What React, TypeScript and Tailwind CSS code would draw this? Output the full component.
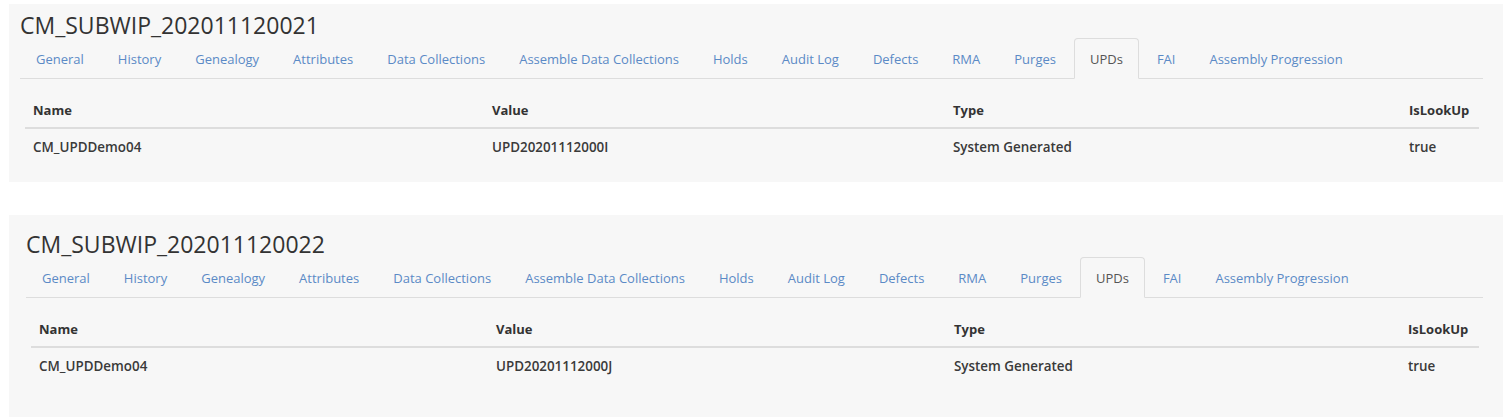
import React from 'react';

const tabs = [
  'General',
  'History',
  'Genealogy',
  'Attributes',
  'Data Collections',
  'Assemble Data Collections',
  'Holds',
  'Audit Log',
  'Defects',
  'RMA',
  'Purges',
  'UPDs',
  'FAI',
  'Assembly Progression',
];

interface UpdRow {
  name: string;
  value: string;
  type: string;
  isLookUp: string;
}

interface ContainerPanelProps {
  title: string;
  rows: UpdRow[];
  panelClass: string;
  cols: string;
}

const TabBar: React.FC<{ active: string }> = ({ active }) => (
  <ul className="flex border-b border-[#dddddd] mr-[20px]">
    {tabs.map((t) => (
      <li key={t} className="-mb-px mr-[2px]">
        {t === active ? (
          <span className="block px-[15px] pt-[10px] pb-[9px] leading-5 text-[13px] text-[#555555] bg-[#f7f7f7] border border-[#dddddd] border-b-transparent rounded-t">
            {t}
          </span>
        ) : (
          <a className="block px-[15px] pt-[10px] pb-[9px] leading-5 text-[13px] text-[#5b8ac6] border border-transparent cursor-pointer">
            {t}
          </a>
        )}
      </li>
    ))}
  </ul>
);

const ContainerPanel: React.FC<ContainerPanelProps> = ({ title, rows, panelClass, cols }) => (
  <div className={`bg-[#f7f7f7] ${panelClass}`}>
    <h3 className="text-[23px] leading-[26px] text-[#333333]">{title}</h3>
    <TabBar active="UPDs" />
    <div className="mt-3 ml-[5px] mr-[24px] text-[#333333]">
      <div className={`grid ${cols} border-b-2 border-[#dddddd] font-bold text-[13px]`}>
        <div className="px-2 pt-[9px] pb-[7px] leading-5">Name</div>
        <div className="px-2 pt-[9px] pb-[7px] leading-5">Value</div>
        <div className="px-2 pt-[9px] pb-[7px] leading-5">Type</div>
        <div className="px-2 pt-[9px] pb-[7px] leading-5">IsLookUp</div>
      </div>
      {rows.map((r) => (
        <div key={r.value} className={`grid ${cols} font-semibold text-[13.4px] text-[#3a3a3a]`}>
          <div className="p-2 leading-5">{r.name}</div>
          <div className="p-2 leading-5">{r.value}</div>
          <div className="p-2 leading-5">{r.type}</div>
          <div className="p-2 leading-5">{r.isLookUp}</div>
        </div>
      ))}
    </div>
  </div>
);

export default function App() {
  return (
    <div className="w-[1509px] h-[420px] bg-white overflow-hidden font-['Open_Sans',sans-serif]">
      <div className="pt-[4px] pl-[9px] w-[1503px]">
        <ContainerPanel
          title="CM_SUBWIP_202011120021"
          panelClass="pt-[8px] pl-[11px] pb-[17px] h-[178px]"
          cols="grid-cols-[459px_461px_456px_1fr]"
          rows={[
            { name: 'CM_UPDDemo04', value: 'UPD20201112000I', type: 'System Generated', isLookUp: 'true' },
          ]}
        />
      </div>
      <div className="pt-[33px] pl-[9px] w-[1503px]">
        <ContainerPanel
          title="CM_SUBWIP_202011120022"
          panelClass="pt-[16px] pl-[17px] h-[202px]"
          cols="grid-cols-[457px_458px_454px_1fr]"
          rows={[
            { name: 'CM_UPDDemo04', value: 'UPD20201112000J', type: 'System Generated', isLookUp: 'true' },
          ]}
        />
      </div>
    </div>
  );
}
